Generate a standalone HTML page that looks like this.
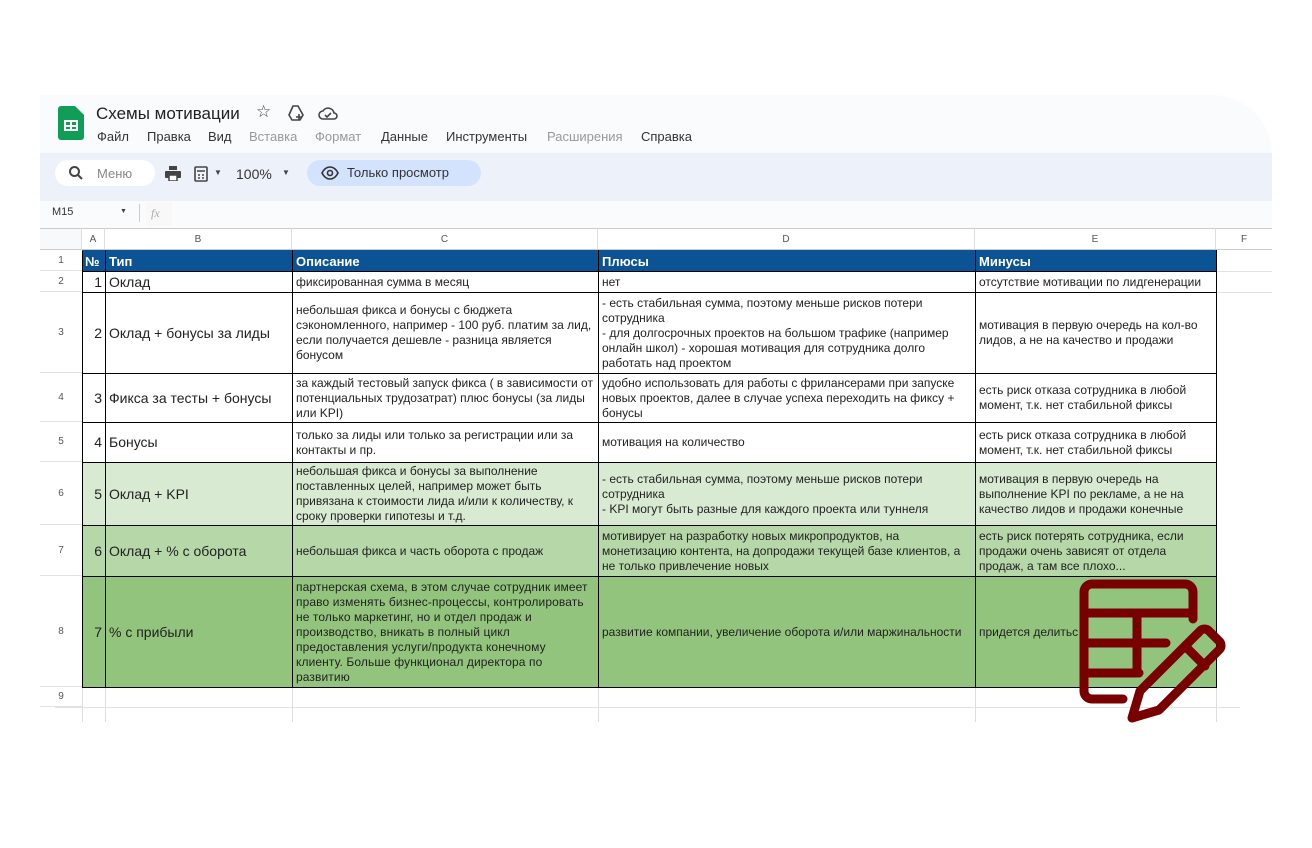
<!DOCTYPE html>
<html><head><meta charset="utf-8">
<style>
*{margin:0;padding:0;box-sizing:border-box}
body{width:1312px;height:848px;background:#fff;position:relative;overflow:hidden;font-family:"Liberation Sans",Arial,sans-serif;color:#222}
.abs{position:absolute}
.app{left:40px;top:95px;width:1232px;height:133px;background:#f9fbfd;border-top-right-radius:60px}
.tb{left:40px;top:153px;width:1232px;height:48px;background:#edf2fa}
.m{position:absolute;top:129px;font-size:13px;color:#333;white-space:nowrap}
.rh{position:absolute;left:40px;width:42px;text-align:center;font-size:10px;color:#555;display:flex;align-items:center;justify-content:center;border-bottom:1px solid #e2e2e2}
.ch{position:absolute;top:228px;height:22px;font-size:10px;color:#555;display:flex;align-items:center;justify-content:center;border-right:1px solid #ddd;border-top:1px solid #ccc;border-bottom:1px solid #ccc;background:#fff}
table{position:absolute;left:82px;top:250px;border-collapse:collapse;table-layout:fixed}
td{border:1px solid #000;font-size:12px;line-height:15px;padding:0 3px;vertical-align:middle;color:#222;overflow:hidden}
td.n{font-size:14px;text-align:right;padding-right:3px}
td.t{font-size:14px}
tr.h td{background:#0b5394;color:#fff;font-weight:bold;font-size:13px;border-color:#0b5394 #000 #000 #000}
tr.g1 td{background:#d9ead3}
tr.g2 td{background:#b6d7a8}
tr.g3 td{background:#93c47d}
</style></head><body>
<div class="abs app"></div>
<div class="abs tb"></div>
<svg class="abs" style="left:58px;top:106px" width="26" height="34" viewBox="0 0 26 34">
<path d="M3 0h14l9 9v22a3 3 0 0 1-3 3H3a3 3 0 0 1-3-3V3a3 3 0 0 1 3-3z" fill="#0f9d58"/>
<rect x="6" y="14" width="14" height="11" fill="#fff"/>
<rect x="8" y="16" width="4" height="3" fill="#0f9d58"/><rect x="14" y="16" width="4" height="3" fill="#0f9d58"/>
<rect x="8" y="21" width="4" height="2" fill="#0f9d58"/><rect x="14" y="21" width="4" height="2" fill="#0f9d58"/>
</svg>
<div class="abs" style="left:96px;top:104px;font-size:17px;color:#222">Схемы мотивации</div>
<div class="abs" style="left:256px;top:102px;font-size:17px;color:#444">☆</div>
<svg class="abs" style="left:287px;top:104px" width="18" height="18" viewBox="0 0 18 18" fill="none" stroke="#444" stroke-width="1.6"><path d="M6 2h5l5 9-3 5H5L2 11z"/><path d="M12 10v6M9 13h6"/></svg>
<svg class="abs" style="left:318px;top:106px" width="20" height="14" viewBox="0 0 20 14" fill="none" stroke="#444" stroke-width="1.6"><path d="M5 13a4 4 0 0 1 0-8 6 6 0 0 1 11 2 3 3 0 0 1 0 6z"/><path d="M7 9l2 2 4-4"/></svg>
<div class="m" style="left:97px">Файл</div>
<div class="m" style="left:147px">Правка</div>
<div class="m" style="left:208px">Вид</div>
<div class="m" style="left:249px;color:#999">Вставка</div>
<div class="m" style="left:315px;color:#999">Формат</div>
<div class="m" style="left:381px">Данные</div>
<div class="m" style="left:446px">Инструменты</div>
<div class="m" style="left:547px;color:#999">Расширения</div>
<div class="m" style="left:641px">Справка</div>
<div class="abs" style="left:55px;top:160px;width:100px;height:26px;background:#fff;border-radius:13px"></div>
<svg class="abs" style="left:68px;top:165px" width="16" height="16" viewBox="0 0 16 16" fill="none" stroke="#444" stroke-width="2"><circle cx="6.5" cy="6.5" r="4.5"/><path d="M10 10l4 4"/></svg>
<div class="abs" style="left:97px;top:166px;font-size:13px;color:#888">Меню</div>
<svg class="abs" style="left:165px;top:166px" width="16" height="15" viewBox="0 0 16 15" fill="#444"><rect x="4" y="0" width="8" height="4"/><rect x="0" y="5" width="16" height="7" rx="1"/><rect x="4" y="9" width="8" height="6" fill="#fff" stroke="#444" stroke-width="1.5"/></svg>
<svg class="abs" style="left:194px;top:166px" width="14" height="16" viewBox="0 0 14 16" fill="none" stroke="#444" stroke-width="1.6"><rect x="1" y="1" width="12" height="14" rx="1"/><path d="M3 5h8M4 9h2M8 9h2M4 12h2M8 12h2"/></svg>
<div class="abs" style="left:214px;top:168px;font-size:8px;color:#444">▼</div>
<div class="abs" style="left:236px;top:166px;font-size:14px;color:#333">100%</div>
<div class="abs" style="left:282px;top:168px;font-size:8px;color:#444">▼</div>
<div class="abs" style="left:307px;top:160px;width:174px;height:26px;background:#d3e3fd;border-radius:13px"></div>
<svg class="abs" style="left:321px;top:166px" width="18" height="14" viewBox="0 0 18 14" fill="none" stroke="#333" stroke-width="1.6"><path d="M1 7c2-4 5-6 8-6s6 2 8 6c-2 4-5 6-8 6S3 11 1 7z"/><circle cx="9" cy="7" r="2.5"/></svg>
<div class="abs" style="left:347px;top:165px;font-size:13px;color:#333">Только просмотр</div>
<div class="abs" style="left:52px;top:206px;font-size:11px;color:#333">M15</div>
<div class="abs" style="left:120px;top:208px;font-size:7px;color:#444">▼</div>
<div class="abs" style="left:139px;top:204px;width:1px;height:18px;background:#ccc"></div>
<div class="abs" style="left:146px;top:202px;width:26px;height:24px;background:#f8f8f8;font-size:12px;color:#aaa;font-style:italic;font-family:'Liberation Serif',serif;padding:4px 5px">fx</div>

<div class="ch" style="left:40px;width:42px;background:#f8f9fa"></div>
<div class="ch" style="left:82px;width:23px">A</div>
<div class="ch" style="left:105px;width:187px">B</div>
<div class="ch" style="left:292px;width:306px">C</div>
<div class="ch" style="left:598px;width:377px">D</div>
<div class="ch" style="left:975px;width:241px">E</div>
<div class="ch" style="left:1216px;width:56px;border-right:none">F</div>

<div class="rh" style="top:250px;height:21px">1</div>
<div class="rh" style="top:271px;height:21px">2</div>
<div class="rh" style="top:292px;height:81px">3</div>
<div class="rh" style="top:373px;height:49px">4</div>
<div class="rh" style="top:422px;height:40px">5</div>
<div class="rh" style="top:462px;height:63px">6</div>
<div class="rh" style="top:525px;height:51px">7</div>
<div class="rh" style="top:576px;height:111px">8</div>
<div class="rh" style="top:687px;height:20px">9</div>
<div class="abs" style="left:82px;top:250px;width:1px;height:472px;background:#ddd"></div>
<div class="abs" style="left:105px;top:687px;width:1px;height:35px;background:#ddd"></div>
<div class="abs" style="left:292px;top:687px;width:1px;height:35px;background:#ddd"></div>
<div class="abs" style="left:598px;top:687px;width:1px;height:35px;background:#ddd"></div>
<div class="abs" style="left:975px;top:687px;width:1px;height:35px;background:#ddd"></div>
<div class="abs" style="left:1216px;top:250px;width:1px;height:472px;background:#ddd"></div>
<div class="abs" style="left:55px;top:707px;width:1185px;height:1px;background:#e2e2e2"></div>
<div class="abs" style="left:1216px;top:271px;width:56px;height:1px;background:#e2e2e2"></div>
<div class="abs" style="left:1216px;top:292px;width:56px;height:1px;background:#e2e2e2"></div>

<table>
<colgroup><col style="width:23px"><col style="width:187px"><col style="width:306px"><col style="width:377px"><col style="width:241px"></colgroup>
<tr class="h" style="height:21px"><td style="padding:0 2px">№</td><td>Тип</td><td>Описание</td><td>Плюсы</td><td>Минусы</td></tr>
<tr style="height:21px"><td class="n">1</td><td class="t">Оклад</td><td>фиксированная сумма в месяц</td><td>нет</td><td>отсутствие мотивации по лидгенерации</td></tr>
<tr style="height:81px"><td class="n">2</td><td class="t">Оклад + бонусы за лиды</td><td>небольшая фикса и бонусы с бюджета сэкономленного, например - 100 руб. платим за лид, если получается дешевле - разница является бонусом</td><td>- есть стабильная сумма, поэтому меньше рисков потери сотрудника<br>- для долгосрочных проектов на большом трафике (например онлайн школ) - хорошая мотивация для сотрудника долго работать над проектом</td><td>мотивация в первую очередь на кол-во лидов, а не на качество и продажи</td></tr>
<tr style="height:49px"><td class="n">3</td><td class="t">Фикса за тесты + бонусы</td><td>за каждый тестовый запуск фикса ( в зависимости от потенциальных трудозатрат) плюс бонусы (за лиды или KPI)</td><td>удобно использовать для работы с фрилансерами при запуске новых проектов, далее в случае успеха переходить на фиксу + бонусы</td><td>есть риск отказа сотрудника в любой момент, т.к. нет стабильной фиксы</td></tr>
<tr style="height:40px"><td class="n">4</td><td class="t">Бонусы</td><td>только за лиды или только за регистрации или за контакты и пр.</td><td>мотивация на количество</td><td>есть риск отказа сотрудника в любой момент, т.к. нет стабильной фиксы</td></tr>
<tr class="g1" style="height:63px"><td class="n">5</td><td class="t">Оклад + KPI</td><td>небольшая фикса и бонусы за выполнение поставленных целей, например может быть привязана к стоимости лида и/или к количеству, к сроку проверки гипотезы и т.д.</td><td>- есть стабильная сумма, поэтому меньше рисков потери сотрудника<br>- KPI могут быть разные для каждого проекта или туннеля</td><td>мотивация в первую очередь на выполнение KPI по рекламе, а не на качество лидов и продажи конечные</td></tr>
<tr class="g2" style="height:51px"><td class="n">6</td><td class="t">Оклад + % с оборота</td><td>небольшая фикса и часть оборота с продаж</td><td>мотивирует на разработку новых микропродуктов, на монетизацию контента, на допродажи текущей базе клиентов, а не только привлечение новых</td><td>есть риск потерять сотрудника, если продажи очень зависят от отдела продаж, а там все плохо...</td></tr>
<tr class="g3" style="height:111px"><td class="n">7</td><td class="t">% с прибыли</td><td style="letter-spacing:0.1px">партнерская схема, в этом случае сотрудник имеет право изменять бизнес-процессы, контролировать не только маркетинг, но и отдел продаж и производство, вникать в полный цикл предоставления услуги/продукта конечному клиенту. Больше функционал директора по развитию</td><td>развитие компании, увеличение оборота и/или маржинальности</td><td>придется делитьс</td></tr>
</table>

<svg class="abs" style="left:0;top:0" width="1312" height="848" viewBox="0 0 1312 848" fill="none" stroke="#780000" stroke-width="9" stroke-linecap="round" stroke-linejoin="round">
<path d="M1123 699H1092a8 8 0 0 1-8-8V592a8 8 0 0 1 8-8h93a8 8 0 0 1 8 8v27"/>
<path d="M1084 613h105M1084 643h82M1084 673h55M1137 613v60"/>
<path d="M1132 718l8-27 60-60 a6 6 0 0 1 9 0l10 10a6 6 0 0 1 0 9l-60 60z"/>
<path d="M1185 646l20 20"/>
</svg>
</body></html>
